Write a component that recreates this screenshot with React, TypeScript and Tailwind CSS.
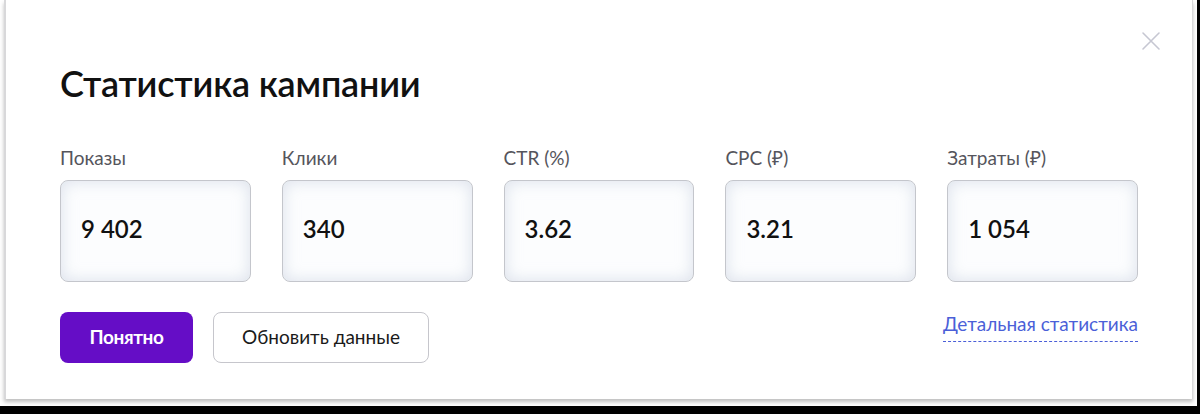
import React from "react";

const stats = [
  { label: "Показы", value: "9 402" },
  { label: "Клики", value: "340" },
  { label: "CTR (%)", value: "3.62" },
  { label: "CPC (₽)", value: "3.21" },
  { label: "Затраты (₽)", value: "1 054" },
];

export default function App() {
  return (
    <div
      className="w-[1200px] h-[414px] bg-black overflow-hidden"
      style={{ fontFamily: "Lato, 'Noto Sans', sans-serif" }}
    >
      <div className="w-[1197px] h-[406px] bg-white pl-[4px] pt-0">
        <div className="relative w-[1189px] h-[399px] bg-white border-l-2 border-r border-[#d8d8da] shadow-[0_3px_4px_rgba(0,0,0,0.25)] pl-[54px] pr-[54px] pt-[60px]">
          <button className="absolute right-[31px] top-[31px] w-[20px] h-[20px] text-[#c6c7d2]">
            <svg viewBox="0 0 20 20" width="20" height="20" fill="none" stroke="currentColor" strokeWidth="1.6" strokeLinecap="round">
              <path d="M2 2L18 18M18 2L2 18" />
            </svg>
          </button>
          <h1 className="text-[36px] leading-[46px] font-semibold text-[#111] tracking-[-0.2px]">
            Статистика кампании
          </h1>
          <div className="mt-[40px] grid grid-cols-5 gap-x-[31px]">
            {stats.map((s) => (
              <div key={s.label} className="flex flex-col">
                <div className="text-[19px] leading-[24px] text-[#55555c]">{s.label}</div>
                <div className="mt-[10px] h-[102px] rounded-[8px] border border-[#c4c6cc] bg-[#fcfdfe] shadow-[inset_0_0_16px_rgba(195,205,222,0.6)] flex items-center pl-[20px] pb-[4px]">
                  <span className="text-[24px] font-semibold text-[#111]">{s.value}</span>
                </div>
              </div>
            ))}
          </div>
          <div className="mt-[30px] flex items-start justify-between">
            <div className="flex gap-[20px]">
              <button className="h-[51px] w-[133px] rounded-[8px] bg-[#650dc6] text-white text-[19px] font-bold tracking-[-0.4px]">
                Понятно
              </button>
              <button className="h-[51px] w-[216px] rounded-[8px] border border-[#c6c6cc] bg-white text-[19px] text-[#1a1a1a]">
                Обновить данные
              </button>
            </div>
            <a className="text-[19px] leading-[24px] text-[#4b5fd8] border-b border-dashed border-[#4b5fd8] pb-[5px]">
              Детальная статистика
            </a>
          </div>
        </div>
      </div>
    </div>
  );
}
